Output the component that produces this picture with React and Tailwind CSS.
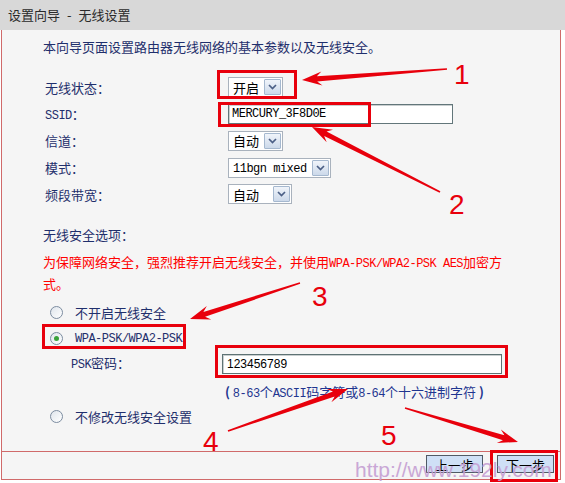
import React from 'react';

const RED = '#e8000c';

// tapered annotation arrow from tail (tx,ty) to tip (px,py)
function arrowPoints(tx, ty, px, py, headLen = 20, headW = 7, s0 = 0.8, s1 = 2.6) {
    const dx = px - tx, dy = py - ty;
    const len = Math.hypot(dx, dy);
    const ux = dx / len, uy = dy / len;
    const nx = -uy, ny = ux;
    const jx = px - ux * headLen * 0.75, jy = py - uy * headLen * 0.75;
    const wx = px - ux * headLen, wy = py - uy * headLen;
    const pts = [
        [tx + nx * s0, ty + ny * s0],
        [jx + nx * s1, jy + ny * s1],
        [wx + nx * headW, wy + ny * headW],
        [px, py],
        [wx - nx * headW, wy - ny * headW],
        [jx - nx * s1, jy - ny * s1],
        [tx - nx * s0, ty - ny * s0],
    ];
    return pts.map(p => p.map(v => v.toFixed(1)).join(',')).join(' ');
}

const arrows = [
    [447, 69, 302, 80],
    [440, 192, 312, 127],
    [300, 283, 190, 319],
    [228, 431, 348, 389],
    [405, 408, 518, 442],
];

function M({ children }) {
    return <span className="font-['Liberation_Mono',monospace] text-[12px] tracking-[-0.5px]">{children}</span>;
}

function Select({ text, className, mono }) {
    return (
        <div className={`flex items-center h-[20px] bg-white border border-[#a9b2bd] pl-[4px] pr-[1px] ${className}`}>
            <span className="flex-1 text-[13px] leading-none text-black whitespace-nowrap">
                {mono ? <M>{text}</M> : text}
            </span>
            <span className="w-[17px] h-[16px] border border-[#a5b8cf] rounded-[1px] bg-linear-to-b from-[#f0f4fa] to-[#ccd9ea] flex items-center justify-center">
                <svg width="9" height="6" viewBox="0 0 9 6">
                    <polyline points="1,1 4.5,4.5 8,1" stroke="#4b5f86" strokeWidth="1.7" fill="none" />
                </svg>
            </span>
        </div>
    );
}

function Radio({ checked }) {
    return (
        <span className="w-[13px] h-[13px] rounded-full border border-[#7c8ca0] bg-linear-to-br from-[#dfe5ec] to-white flex items-center justify-center shrink-0">
            {checked && <span className="w-[5px] h-[5px] rounded-full bg-[#3aa23a]" />}
        </span>
    );
}

function Row({ label, children }) {
    return (
        <div className="flex items-center h-[26.75px]">
            <div className="w-[183px] text-[13px] leading-none text-[#1f2f6c]">{label}</div>
            {children}
        </div>
    );
}

export default function App() {
    return (
        <div className="relative w-[565px] h-[483px] bg-white overflow-hidden font-['Noto_Sans_CJK_SC',sans-serif]">
            {/* title bar */}
            <div className="h-[30px] bg-[#d8d8d8] flex items-center pl-[8px] text-[13px] text-[#2a2a2a] whitespace-nowrap">
                设置向导<span className="mx-[7px]">-</span>无线设置
            </div>

            {/* frame */}
            <div className="ml-[1px] w-[560px] border-x border-b border-[#d06a6a] bg-[#f5f5f5]">
                <div className="h-[421px] pl-[41px]">
                    <div className="pt-[8px] h-[26px] leading-[18px] text-[13px] text-[#1f2f6c]">
                        本向导页面设置路由器无线网络的基本参数以及无线安全。
                    </div>

                    <div className="mt-[18px] pl-[2px]">
                        <Row label="无线状态：">
                            <Select text="开启" className="w-[55px]" />
                        </Row>
                        <Row label={<><M>SSID</M>：</>}>
                            <div className="w-[225px] h-[20px] bg-white border border-[#62767a] shadow-[inset_1px_1px_0_#c9cfd0] pl-[3px] flex items-center text-black leading-none">
                                <M>MERCURY_3F8D0E</M>
                            </div>
                        </Row>
                        <Row label="信道：">
                            <Select text="自动" className="w-[55px]" />
                        </Row>
                        <Row label="模式：">
                            <Select text="11bgn mixed" mono className="w-[103px]" />
                        </Row>
                        <Row label="频段带宽：">
                            <Select text="自动" className="w-[64px]" />
                        </Row>
                    </div>

                    <div className="mt-[18px] h-[18px] leading-[18px] text-[13px] text-[#1f2f6c]">无线安全选项：</div>
                    <div className="mt-[8px] leading-[20px] text-[13px] text-[#ff0000] whitespace-nowrap">
                        为保障网络安全，强烈推荐开启无线安全，并使用<M>WPA-PSK/WPA2-PSK AES</M>加密方<br />式。
                    </div>

                    <div className="mt-[6px] pl-[7px]">
                        <div className="flex items-center h-[26px] gap-[12px] text-[13px] leading-none text-[#1f2f6c]">
                            <Radio />
                            <span>不开启无线安全</span>
                        </div>
                        <div className="flex items-center h-[26px] gap-[12px] text-[13px] leading-none text-[#1f2f6c]">
                            <Radio checked />
                            <M>WPA-PSK/WPA2-PSK</M>
                        </div>
                    </div>

                    <div className="flex items-center h-[24px] pl-[28px]">
                        <div className="w-[151px] text-[13px] leading-none text-[#1f2f6c]"><M>PSK</M>密码：</div>
                        <div className="w-[280px] h-[20px] bg-white border border-[#5e7274] shadow-[inset_1px_1px_0_#c9cfd0] pl-[4px] flex items-center font-['Liberation_Sans',sans-serif] text-[12px] text-black leading-none">
                            123456789
                        </div>
                    </div>

                    <div className="mt-[7px] h-[18px] leading-[18px] pl-[182px] text-[13px] text-[#1f3590] whitespace-nowrap">
                        <span className="font-bold">(</span> <M>8-63</M>个<M>ASCII</M>码字符或<M>8-64</M>个十六进制字符 <span className="font-bold">)</span>
                    </div>

                    <div className="mt-[6px] pl-[7px] flex items-center h-[20px] gap-[12px] text-[13px] leading-none text-[#1f2f6c]">
                        <Radio />
                        <span>不修改无线安全设置</span>
                    </div>
                </div>

                {/* footer */}
                <div className="h-[28px] border-t border-[#d06a6a] flex justify-end gap-[14px] pt-[3px] pr-[6px]">
                    <button className="w-[57px] h-[18px] border border-[#505a66] bg-[#cfe0f6] text-[13px] leading-none text-black flex items-center justify-center">上一步</button>
                    <button className="w-[57px] h-[18px] border border-[#505a66] bg-[#cfe0f6] text-[13px] leading-none text-black flex items-center justify-center">下一步</button>
                </div>
            </div>

            {/* annotations */}
            <div className="absolute inset-0 pointer-events-none">
                <svg width="565" height="483" className="absolute inset-0">
                    {arrows.map((a, i) => (
                        <polygon key={i} points={arrowPoints(...a)} fill={RED} />
                    ))}
                </svg>
                <div className="absolute left-[217px] top-[70px] w-[80px] h-[29px] border-[3px] border-[#e8000c]" />
                <div className="absolute left-[218px] top-[102px] w-[153px] h-[25px] border-[3px] border-[#e8000c]" />
                <div className="absolute left-[42px] top-[324px] w-[144px] h-[25px] border-[3px] border-[#e8000c]" />
                <div className="absolute left-[215px] top-[345px] w-[293px] h-[33px] border-[3px] border-[#e8000c]" />
                <div className="absolute left-[490px] top-[450px] w-[68px] h-[32px] border-[3px] border-[#e8000c]" />

                <span className="absolute left-[454px] top-[61px] text-[28px] leading-none text-[#e8000c] font-['Liberation_Sans',sans-serif]">1</span>
                <span className="absolute left-[449px] top-[191px] text-[28px] leading-none text-[#e8000c] font-['Liberation_Sans',sans-serif]">2</span>
                <span className="absolute left-[312px] top-[283px] text-[28px] leading-none text-[#e8000c] font-['Liberation_Sans',sans-serif]">3</span>
                <span className="absolute left-[203px] top-[428px] text-[28px] leading-none text-[#e8000c] font-['Liberation_Sans',sans-serif]">4</span>
                <span className="absolute left-[381px] top-[422px] text-[28px] leading-none text-[#e8000c] font-['Liberation_Sans',sans-serif]">5</span>

                <span className="absolute left-[355px] top-[459px] text-[21px] leading-none text-[#c59fd3] opacity-90 font-['Liberation_Sans',sans-serif] whitespace-nowrap">
                    http://www.192ly.com
                </span>
            </div>
        </div>
    );
}
